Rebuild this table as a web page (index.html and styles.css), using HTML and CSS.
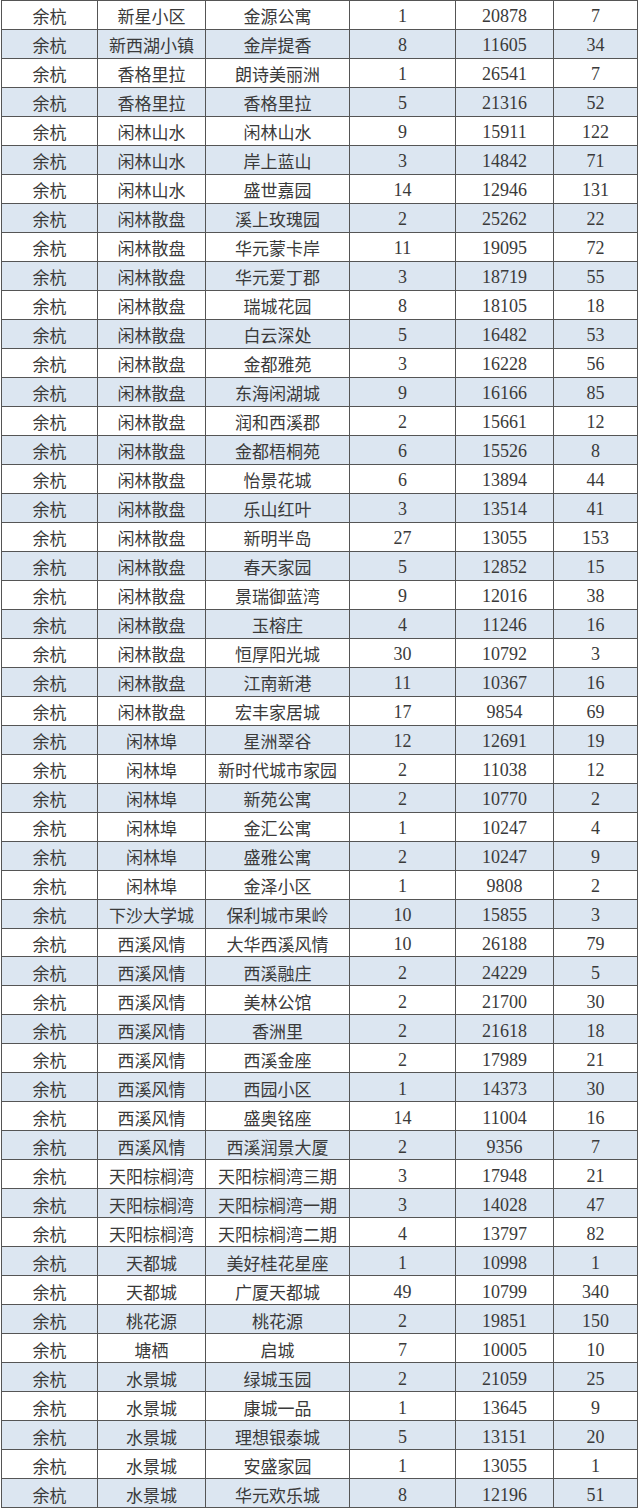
FILE: index.html
```html
<!DOCTYPE html>
<html lang="zh">
<head>
<meta charset="utf-8">
<title>余杭楼盘数据</title>
<link rel="stylesheet" href="styles.css">
</head>
<body>
<div class="table">
<div class="row"><div class="cell">余杭</div><div class="cell">新星小区</div><div class="cell">金源公寓</div><div class="cell num">1</div><div class="cell num">20878</div><div class="cell num">7</div></div>
<div class="row"><div class="cell">余杭</div><div class="cell">新西湖小镇</div><div class="cell">金岸提香</div><div class="cell num">8</div><div class="cell num">11605</div><div class="cell num">34</div></div>
<div class="row"><div class="cell">余杭</div><div class="cell">香格里拉</div><div class="cell">朗诗美丽洲</div><div class="cell num">1</div><div class="cell num">26541</div><div class="cell num">7</div></div>
<div class="row"><div class="cell">余杭</div><div class="cell">香格里拉</div><div class="cell">香格里拉</div><div class="cell num">5</div><div class="cell num">21316</div><div class="cell num">52</div></div>
<div class="row"><div class="cell">余杭</div><div class="cell">闲林山水</div><div class="cell">闲林山水</div><div class="cell num">9</div><div class="cell num">15911</div><div class="cell num">122</div></div>
<div class="row"><div class="cell">余杭</div><div class="cell">闲林山水</div><div class="cell">岸上蓝山</div><div class="cell num">3</div><div class="cell num">14842</div><div class="cell num">71</div></div>
<div class="row"><div class="cell">余杭</div><div class="cell">闲林山水</div><div class="cell">盛世嘉园</div><div class="cell num">14</div><div class="cell num">12946</div><div class="cell num">131</div></div>
<div class="row"><div class="cell">余杭</div><div class="cell">闲林散盘</div><div class="cell">溪上玫瑰园</div><div class="cell num">2</div><div class="cell num">25262</div><div class="cell num">22</div></div>
<div class="row"><div class="cell">余杭</div><div class="cell">闲林散盘</div><div class="cell">华元蒙卡岸</div><div class="cell num">11</div><div class="cell num">19095</div><div class="cell num">72</div></div>
<div class="row"><div class="cell">余杭</div><div class="cell">闲林散盘</div><div class="cell">华元爱丁郡</div><div class="cell num">3</div><div class="cell num">18719</div><div class="cell num">55</div></div>
<div class="row"><div class="cell">余杭</div><div class="cell">闲林散盘</div><div class="cell">瑞城花园</div><div class="cell num">8</div><div class="cell num">18105</div><div class="cell num">18</div></div>
<div class="row"><div class="cell">余杭</div><div class="cell">闲林散盘</div><div class="cell">白云深处</div><div class="cell num">5</div><div class="cell num">16482</div><div class="cell num">53</div></div>
<div class="row"><div class="cell">余杭</div><div class="cell">闲林散盘</div><div class="cell">金都雅苑</div><div class="cell num">3</div><div class="cell num">16228</div><div class="cell num">56</div></div>
<div class="row"><div class="cell">余杭</div><div class="cell">闲林散盘</div><div class="cell">东海闲湖城</div><div class="cell num">9</div><div class="cell num">16166</div><div class="cell num">85</div></div>
<div class="row"><div class="cell">余杭</div><div class="cell">闲林散盘</div><div class="cell">润和西溪郡</div><div class="cell num">2</div><div class="cell num">15661</div><div class="cell num">12</div></div>
<div class="row"><div class="cell">余杭</div><div class="cell">闲林散盘</div><div class="cell">金都梧桐苑</div><div class="cell num">6</div><div class="cell num">15526</div><div class="cell num">8</div></div>
<div class="row"><div class="cell">余杭</div><div class="cell">闲林散盘</div><div class="cell">怡景花城</div><div class="cell num">6</div><div class="cell num">13894</div><div class="cell num">44</div></div>
<div class="row"><div class="cell">余杭</div><div class="cell">闲林散盘</div><div class="cell">乐山红叶</div><div class="cell num">3</div><div class="cell num">13514</div><div class="cell num">41</div></div>
<div class="row"><div class="cell">余杭</div><div class="cell">闲林散盘</div><div class="cell">新明半岛</div><div class="cell num">27</div><div class="cell num">13055</div><div class="cell num">153</div></div>
<div class="row"><div class="cell">余杭</div><div class="cell">闲林散盘</div><div class="cell">春天家园</div><div class="cell num">5</div><div class="cell num">12852</div><div class="cell num">15</div></div>
<div class="row"><div class="cell">余杭</div><div class="cell">闲林散盘</div><div class="cell">景瑞御蓝湾</div><div class="cell num">9</div><div class="cell num">12016</div><div class="cell num">38</div></div>
<div class="row"><div class="cell">余杭</div><div class="cell">闲林散盘</div><div class="cell">玉榕庄</div><div class="cell num">4</div><div class="cell num">11246</div><div class="cell num">16</div></div>
<div class="row"><div class="cell">余杭</div><div class="cell">闲林散盘</div><div class="cell">恒厚阳光城</div><div class="cell num">30</div><div class="cell num">10792</div><div class="cell num">3</div></div>
<div class="row"><div class="cell">余杭</div><div class="cell">闲林散盘</div><div class="cell">江南新港</div><div class="cell num">11</div><div class="cell num">10367</div><div class="cell num">16</div></div>
<div class="row"><div class="cell">余杭</div><div class="cell">闲林散盘</div><div class="cell">宏丰家居城</div><div class="cell num">17</div><div class="cell num">9854</div><div class="cell num">69</div></div>
<div class="row"><div class="cell">余杭</div><div class="cell">闲林埠</div><div class="cell">星洲翠谷</div><div class="cell num">12</div><div class="cell num">12691</div><div class="cell num">19</div></div>
<div class="row"><div class="cell">余杭</div><div class="cell">闲林埠</div><div class="cell">新时代城市家园</div><div class="cell num">2</div><div class="cell num">11038</div><div class="cell num">12</div></div>
<div class="row"><div class="cell">余杭</div><div class="cell">闲林埠</div><div class="cell">新苑公寓</div><div class="cell num">2</div><div class="cell num">10770</div><div class="cell num">2</div></div>
<div class="row"><div class="cell">余杭</div><div class="cell">闲林埠</div><div class="cell">金汇公寓</div><div class="cell num">1</div><div class="cell num">10247</div><div class="cell num">4</div></div>
<div class="row"><div class="cell">余杭</div><div class="cell">闲林埠</div><div class="cell">盛雅公寓</div><div class="cell num">2</div><div class="cell num">10247</div><div class="cell num">9</div></div>
<div class="row"><div class="cell">余杭</div><div class="cell">闲林埠</div><div class="cell">金泽小区</div><div class="cell num">1</div><div class="cell num">9808</div><div class="cell num">2</div></div>
<div class="row"><div class="cell">余杭</div><div class="cell">下沙大学城</div><div class="cell">保利城市果岭</div><div class="cell num">10</div><div class="cell num">15855</div><div class="cell num">3</div></div>
<div class="row"><div class="cell">余杭</div><div class="cell">西溪风情</div><div class="cell">大华西溪风情</div><div class="cell num">10</div><div class="cell num">26188</div><div class="cell num">79</div></div>
<div class="row"><div class="cell">余杭</div><div class="cell">西溪风情</div><div class="cell">西溪融庄</div><div class="cell num">2</div><div class="cell num">24229</div><div class="cell num">5</div></div>
<div class="row"><div class="cell">余杭</div><div class="cell">西溪风情</div><div class="cell">美林公馆</div><div class="cell num">2</div><div class="cell num">21700</div><div class="cell num">30</div></div>
<div class="row"><div class="cell">余杭</div><div class="cell">西溪风情</div><div class="cell">香洲里</div><div class="cell num">2</div><div class="cell num">21618</div><div class="cell num">18</div></div>
<div class="row"><div class="cell">余杭</div><div class="cell">西溪风情</div><div class="cell">西溪金座</div><div class="cell num">2</div><div class="cell num">17989</div><div class="cell num">21</div></div>
<div class="row"><div class="cell">余杭</div><div class="cell">西溪风情</div><div class="cell">西园小区</div><div class="cell num">1</div><div class="cell num">14373</div><div class="cell num">30</div></div>
<div class="row"><div class="cell">余杭</div><div class="cell">西溪风情</div><div class="cell">盛奥铭座</div><div class="cell num">14</div><div class="cell num">11004</div><div class="cell num">16</div></div>
<div class="row"><div class="cell">余杭</div><div class="cell">西溪风情</div><div class="cell">西溪润景大厦</div><div class="cell num">2</div><div class="cell num">9356</div><div class="cell num">7</div></div>
<div class="row"><div class="cell">余杭</div><div class="cell">天阳棕榈湾</div><div class="cell">天阳棕榈湾三期</div><div class="cell num">3</div><div class="cell num">17948</div><div class="cell num">21</div></div>
<div class="row"><div class="cell">余杭</div><div class="cell">天阳棕榈湾</div><div class="cell">天阳棕榈湾一期</div><div class="cell num">3</div><div class="cell num">14028</div><div class="cell num">47</div></div>
<div class="row"><div class="cell">余杭</div><div class="cell">天阳棕榈湾</div><div class="cell">天阳棕榈湾二期</div><div class="cell num">4</div><div class="cell num">13797</div><div class="cell num">82</div></div>
<div class="row"><div class="cell">余杭</div><div class="cell">天都城</div><div class="cell">美好桂花星座</div><div class="cell num">1</div><div class="cell num">10998</div><div class="cell num">1</div></div>
<div class="row"><div class="cell">余杭</div><div class="cell">天都城</div><div class="cell">广厦天都城</div><div class="cell num">49</div><div class="cell num">10799</div><div class="cell num">340</div></div>
<div class="row"><div class="cell">余杭</div><div class="cell">桃花源</div><div class="cell">桃花源</div><div class="cell num">2</div><div class="cell num">19851</div><div class="cell num">150</div></div>
<div class="row"><div class="cell">余杭</div><div class="cell">塘栖</div><div class="cell">启城</div><div class="cell num">7</div><div class="cell num">10005</div><div class="cell num">10</div></div>
<div class="row"><div class="cell">余杭</div><div class="cell">水景城</div><div class="cell">绿城玉园</div><div class="cell num">2</div><div class="cell num">21059</div><div class="cell num">25</div></div>
<div class="row"><div class="cell">余杭</div><div class="cell">水景城</div><div class="cell">康城一品</div><div class="cell num">1</div><div class="cell num">13645</div><div class="cell num">9</div></div>
<div class="row"><div class="cell">余杭</div><div class="cell">水景城</div><div class="cell">理想银泰城</div><div class="cell num">5</div><div class="cell num">13151</div><div class="cell num">20</div></div>
<div class="row"><div class="cell">余杭</div><div class="cell">水景城</div><div class="cell">安盛家园</div><div class="cell num">1</div><div class="cell num">13055</div><div class="cell num">1</div></div>
<div class="row"><div class="cell">余杭</div><div class="cell">水景城</div><div class="cell">华元欢乐城</div><div class="cell num">8</div><div class="cell num">12196</div><div class="cell num">51</div></div>
</div>
</body>
</html>
```

FILE: styles.css
```css
html, body {
  margin: 0;
  padding: 0;
  background: #ffffff;
}

body {
  font-family: "Noto Sans CJK SC", "Liberation Sans", sans-serif;
  color: #3a3a3a;
}

.table {
  margin-left: 1px;
  width: 636px;
  height: 1507px;
  display: flex;
  flex-direction: column;
  border-top: 1px solid #555;
  border-left: 1px solid #555;
}

.row {
  flex: 1 1 0;
  min-height: 0;
  display: grid;
  grid-template-columns: 96px 108px 144px 106px 98px 84px;
  background: #ffffff;
}

.row:nth-child(even) {
  background: #dce6f1;
}

.cell {
  display: flex;
  align-items: center;
  justify-content: center;
  border-right: 1px solid #555;
  border-bottom: 1px solid #555;
  font-size: 17px;
  line-height: 1;
  padding-top: 2px;
  white-space: nowrap;
}

.num {
  font-family: "Liberation Serif", "Noto Sans CJK SC", serif;
  font-size: 18px;
  padding-top: 3px;
}
```
